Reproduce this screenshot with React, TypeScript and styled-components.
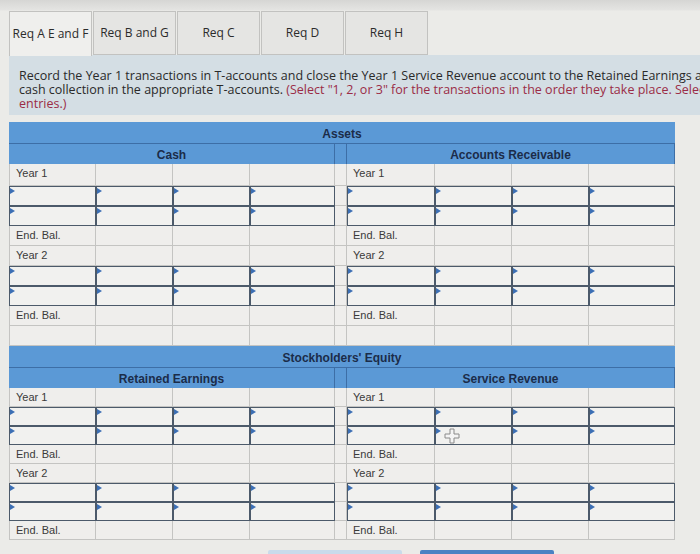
import styled, { createGlobalStyle } from "styled-components";

const GlobalStyle = createGlobalStyle`
  html, body {
    margin: 0;
    padding: 0;
    background: #eaeae7;
    overflow: hidden;
  }
  #root {
    width: 700px;
    height: 554px;
    overflow: hidden;
  }
`;

const Page = styled.div`
  position: relative;
  width: 700px;
  height: 554px;
  padding: 11px 0 0 9px;
  box-sizing: border-box;
  background: linear-gradient(#d6d6d4 0, #e4e4e2 10px, #ebebe8 11px);
  overflow: hidden;
`;

const TabBar = styled.div`
  display: flex;
  gap: 1px;
  height: 44px;
`;

const Tab = styled.div<{ $active?: boolean }>`
  width: 83px;
  box-sizing: border-box;
  display: flex;
  align-items: center;
  justify-content: center;
  padding-bottom: 2px;
  font-family: "Open Sans", "DejaVu Sans", sans-serif;
  font-size: 12px;
  color: #2b2b2b;
  white-space: nowrap;
  background: ${({ $active }) => ($active ? "#efefed" : "#e5e5e3")};
  border: 1px solid #c2c2c0;
  border-bottom: ${({ $active }) => ($active ? "none" : "1px solid #c2c2c0")};
  margin-bottom: ${({ $active }) => ($active ? "-1px" : "0")};
  position: relative;
  z-index: ${({ $active }) => ($active ? 1 : 0)};
`;

const Instructions = styled.div`
  width: 760px;
  box-sizing: border-box;
  background: #d4dee4;
  padding: 14px 10px 4px 10px;
  font-family: "Open Sans", "DejaVu Sans", sans-serif;
  font-size: 12.5px;
  line-height: 14px;
  color: #2a2a2a;
  white-space: nowrap;
`;

const Hint = styled.span`
  color: #9b2c46;
`;

const Ledger = styled.div`
  margin-top: 7px;
  display: grid;
  grid-template-columns: 87px 77px 77px 85px 12px 88px 77px 77px 86px;
  width: 666px;
  font-family: "Liberation Sans", Arial, sans-serif;
`;

const Band = styled.div<{ $h: number }>`
  grid-column: 1 / -1;
  height: ${({ $h }) => $h}px;
  box-sizing: border-box;
  background: #5b99d6;
  border-bottom: 1px solid #3d6ea6;
  display: flex;
  align-items: flex-end;
  justify-content: center;
  padding-bottom: 2px;
  font-size: 12px;
  font-weight: bold;
  color: #1b2c49;
`;

const AccountHead = styled.div<{ $span: number }>`
  grid-column: span ${({ $span }) => $span};
  height: 20px;
  box-sizing: border-box;
  background: #5b99d6;
  border-right: 1px solid #3d6ea6;
  display: flex;
  align-items: center;
  justify-content: center;
  padding-top: 2px;
  font-size: 12px;
  font-weight: bold;
  color: #1b2c49;
`;

const Cell = styled.div<{ $first?: boolean; $h: number }>`
  height: ${({ $h }) => $h}px;
  box-sizing: border-box;
  background: #efeeec;
  border-right: 1px solid #c4c4c2;
  border-bottom: 1px solid #c4c4c2;
  border-left: ${({ $first }) => ($first ? "1px solid #c4c4c2" : "none")};
  padding: 3px 0 0 6px;
  font-size: 11px;
  color: #3a3a3a;
  white-space: nowrap;
`;

const InputCell = styled.div<{ $h: number }>`
  position: relative;
  height: ${({ $h }) => $h}px;
  box-sizing: border-box;
  background: #f1f1ef;
  border: 1px solid #4c5a6a;

  &::before {
    content: "";
    position: absolute;
    left: 0;
    top: 1px;
    border-top: 3px solid transparent;
    border-bottom: 3px solid transparent;
    border-left: 5px solid #3c6fb4;
  }
`;

const Cursor = styled.svg`
  position: absolute;
  left: 444px;
  top: 428px;
`;

const ButtonRow = styled.div`
  display: flex;
  gap: 18px;
  margin: 10px 0 0 259px;
`;

const NavButton = styled.div<{ $primary?: boolean }>`
  width: 134px;
  height: 30px;
  border-radius: 2px;
  background: ${({ $primary }) => ($primary ? "#4b82c3" : "#c9dbeb")};
`;

type RowKind = "year1" | "year2" | "input" | "end" | "blank";

const sectionRows: RowKind[] = ["year1", "input", "input", "end", "year2", "input", "input", "end"];

const labelFor: Record<RowKind, string> = {
  year1: "Year 1",
  year2: "Year 2",
  end: "End. Bal.",
  input: "",
  blank: "",
};

function Row({ kind, k, h }: { kind: RowKind; k: string; h: number }) {
  const cells = [];
  for (let c = 0; c < 9; c++) {
    const isSpacer = c === 4;
    const isLabel = c === 0 || c === 5;
    if (kind === "input" && !isSpacer) {
      cells.push(<InputCell key={`${k}-${c}`} $h={h} />);
    } else {
      cells.push(
        <Cell key={`${k}-${c}`} $first={c === 0} $h={h}>
          {isLabel ? labelFor[kind] : ""}
        </Cell>
      );
    }
  }
  return <>{cells}</>;
}

function Section({
  title,
  left,
  right,
  rows,
  id,
  bandH,
  rowH,
  firstH,
}: {
  title: string;
  left: string;
  right: string;
  rows: RowKind[];
  id: string;
  bandH: number;
  rowH: number;
  firstH: number;
}) {
  return (
    <>
      <Band $h={bandH}>{title}</Band>
      <AccountHead $span={4}>{left}</AccountHead>
      <AccountHead $span={1} />
      <AccountHead $span={4}>{right}</AccountHead>
      {rows.map((r, i) => (
        <Row kind={r} k={`${id}-${i}`} key={`${id}-${i}`} h={i === 0 ? firstH : rowH} />
      ))}
    </>
  );
}

export default function App() {
  return (
    <>
      <GlobalStyle />
      <Page>
        <TabBar>
          <Tab $active>Req A E and F</Tab>
          <Tab>Req B and G</Tab>
          <Tab>Req C</Tab>
          <Tab>Req D</Tab>
          <Tab>Req H</Tab>
        </TabBar>
        <Instructions>
          Record the Year 1 transactions in T-accounts and close the Year 1 Service Revenue account to the Retained Earnings account and record the
          <br />
          cash collection in the appropriate T-accounts.{" "}
          <Hint>(Select "1, 2, or 3" for the transactions in the order they take place. Select "Cl" for closing</Hint>
          <br />
          <Hint>entries.)</Hint>
        </Instructions>
        <Ledger>
          <Section
            id="a"
            title="Assets"
            left="Cash"
            right="Accounts Receivable"
            rows={[...sectionRows, "blank"]}
            bandH={22}
            rowH={20}
            firstH={22}
          />
          <Section
            id="e"
            title="Stockholders' Equity"
            left="Retained Earnings"
            right="Service Revenue"
            rows={sectionRows}
            bandH={22}
            rowH={19}
            firstH={19}
          />
        </Ledger>
        <ButtonRow>
          <NavButton />
          <NavButton $primary />
        </ButtonRow>
        <Cursor width="16" height="16" viewBox="0 0 16 16">
          <path
            d="M6 1h4v5h5v4h-5v5H6v-5H1V6h5z"
            fill="#f4f4f4"
            stroke="#8a8a8a"
            strokeWidth="1"
          />
        </Cursor>
      </Page>
    </>
  );
}
